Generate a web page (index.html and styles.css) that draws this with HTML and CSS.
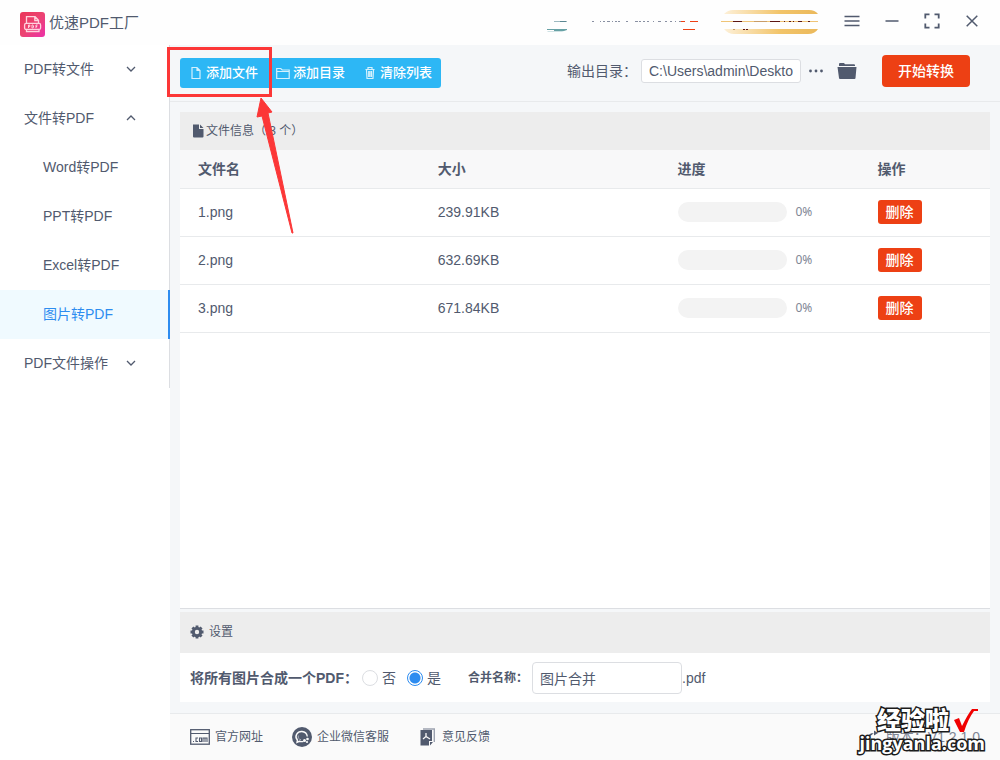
FILE: index.html
```html
<!DOCTYPE html>
<html lang="zh-CN">
<head>
<meta charset="utf-8">
<title>优速PDF工厂</title>
<link rel="stylesheet" href="styles.css">
</head>
<body>
<div class="app">
  <header class="titlebar">
    <svg class="logo" viewBox="0 0 25 25" aria-hidden="true">
      <defs><linearGradient id="lg" x1="0" y1="0" x2="1" y2="1"><stop offset="0" stop-color="#ea3659"/><stop offset=".5" stop-color="#ec4371"/><stop offset="1" stop-color="#ec31aa"/></linearGradient></defs>
      <rect width="25" height="25" rx="3" fill="url(#lg)"/>
      <g fill="none" stroke="#ffd3de" stroke-width="1.3"><path d="M6.500 11V4.700h8.600l3.400 3.600V11M14.800 4.700v3.800h3.700M6.500 17.500v2h12.500v-2"/><rect x="4.600" y="11.400" width="16" height="6" rx="1.500"/><path stroke-width="1" d="M8.500 16v-3h1.300v1.600H8.500M12 13v3h.8l.7-.7v-1.600l-.7-.7zM16 16v-3h1.600M16 14.500h1.200"/></g>
    </svg>
    <h1 class="title">优速PDF工厂</h1>
    <svg class="promo" viewBox="0 0 280 31" aria-hidden="true">
      <defs><linearGradient id="gold"><stop offset="0" stop-color="#fdf0d8"/><stop offset=".6" stop-color="#f2c469"/><stop offset="1" stop-color="#ebb95c"/></linearGradient></defs>
      <path d="M8 14.500h13" stroke="#9db9c0"/><path d="M14 14.500h6" stroke="#5b8792"/>
      <path d="M1 22.500h20" stroke="#67a1a5"/><path d="M8 23h13l-3 1H8z" fill="#67a1a5"/><path d="M1 24h17l-2 1H2z" fill="#cfe2e4"/>
      <path d="M46 14.500h2m6 0h1m2 0h2m2 0h3m2 0h1m2 0h2m1 0h2m6 0h2m7 0h3m1 0h2m2 0h2m2 0h2m4 0h1m4 0h3m4 0h2m3 0h2m3 0h1m3 0h2" stroke="#8990a2"/>
      <path d="M135 14.500h4m5 0h8m-15 8h12" stroke="#ed4014"/>
      <path d="M178 7q4-4 9-4h76q6 0 9 4zM178 22h94q-3 5-10 5h-74q-6 0-10-5z" fill="url(#gold)"/>
      <path d="M175 14.500h97" stroke="#efc477"/><path d="M187 14.500h9m28 0h10m4 0h1m4 0h2m2 0h1m4 0h4m6 0h2m-67 8h2m1 0h2" stroke="#5c1512"/><path d="M208 14.500h13m-34 8h2" stroke="#c89c68"/>
    </svg>
    <div class="window-buttons">
      <button class="icon-button" type="button" aria-label="菜单"><svg viewBox="0 0 16 16"><path d="M.5 3.500h15M.5 8h15M.5 12.500h15"/></svg></button>
      <button class="icon-button" type="button" aria-label="最小化"><svg viewBox="0 0 16 16"><path d="M1.500 8h13"/></svg></button>
      <button class="icon-button" type="button" aria-label="全屏"><svg viewBox="0 0 16 16"><path stroke-width="1.800" d="M1.300 5.500V1.300h4.200M10.500 1.300h4.200v4.200M14.700 10.500v4.200h-4.200M5.500 14.700H1.300v-4.200"/></svg></button>
      <button class="icon-button" type="button" aria-label="关闭"><svg viewBox="0 0 16 16"><path d="M2.700 2.700l10.600 10.600M13.300 2.700L2.700 13.300"/></svg></button>
    </div>
  </header>
  <div class="body">
    <aside class="sidebar">
      <nav class="menu">
        <a class="menu-item" href="#"><span>PDF转文件</span><svg class="chevron" viewBox="0 0 10 10"><path d="M1 3l4 4 4-4"/></svg></a>
        <a class="menu-item" href="#"><span>文件转PDF</span><svg class="chevron" viewBox="0 0 10 10"><path d="M1 7l4-4 4 4"/></svg></a>
        <a class="menu-item sub" href="#">Word转PDF</a>
        <a class="menu-item sub" href="#">PPT转PDF</a>
        <a class="menu-item sub" href="#">Excel转PDF</a>
        <a class="menu-item sub active" href="#">图片转PDF</a>
        <a class="menu-item" href="#"><span>PDF文件操作</span><svg class="chevron" viewBox="0 0 10 10"><path d="M1 3l4 4 4-4"/></svg></a>
      </nav>
    </aside>
    <main class="main">
      <div class="toolbar">
        <div class="button-group">
          <button class="tool" type="button"><svg viewBox="0 0 14 14"><path d="M3 1.500h5l3 3v8H3zM8 1.500v3h3"/></svg>添加文件
            <span class="highlight"><svg class="arrow" viewBox="0 0 40 136" aria-hidden="true"><path d="M4 0l11 14-4 1 25 120h-1L5 18l-5 1z"/></svg></span>
          </button>
          <button class="tool" type="button"><svg viewBox="0 0 14 14"><path d="M.7 2.500h4l1.500 1.500h7v8.500H.7zM.7 5.500h12.500"/></svg>添加目录</button>
          <button class="tool" type="button"><svg viewBox="0 0 14 14"><path d="M2.500 3.500h9M5 3V1.500h4V3M3.500 4l.5 8.500h6l.5-8.500M5.700 5v6M7 5v6M8.500 5v6"/></svg>清除列表</button>
        </div>
        <div class="output">
          <label for="out">输出目录：</label>
          <input class="path" id="out" type="text" value="C:\Users\admin\Desktop">
          <button class="icon-button more" type="button" aria-label="更多"><svg viewBox="0 0 16 16"><g fill="#515a6e" stroke="none"><circle cx="2.500" cy="8" r="1.400"/><circle cx="8" cy="8" r="1.400"/><circle cx="13.500" cy="8" r="1.400"/></g></svg></button>
          <button class="icon-button folder" type="button" aria-label="打开目录"><svg viewBox="0 0 20 18"><path fill="#515a6e" stroke="none" d="M2 4V2q0-1 1-1h4l1 1.200h9q1 0 1 1V4z"/><path fill="#515a6e" stroke="none" d="M1 5h18.500l-1 11q0 1-1 1H3q-1 0-1-1L.5 5z"/></svg></button>
          <button class="start" type="button">开始转换</button>
        </div>
      </div>
      <div class="content">
        <section class="files">
          <h2 class="panel-head"><svg class="doc" viewBox="0 0 12 14"><path fill="#515a6e" d="M1 .5h6V5h4.500v7.500q0 1-1 1H2q-1 0-1-1zM8 .5L11.500 4H8z"/></svg><span>文件信息（ 3 个）</span></h2>
          <table class="file-table">
            <colgroup><col class="wide"><col class="wide"><col class="mid"><col></colgroup>
            <thead><tr><th>文件名</th><th>大小</th><th>进度</th><th>操作</th></tr></thead>
            <tbody>
              <tr><td>1.png</td><td>239.91KB</td><td><div class="progress"><span class="track"></span><span>0%</span></div></td><td><button class="delete" type="button">删除</button></td></tr>
              <tr><td>2.png</td><td>632.69KB</td><td><div class="progress"><span class="track"></span><span>0%</span></div></td><td><button class="delete" type="button">删除</button></td></tr>
              <tr><td>3.png</td><td>671.84KB</td><td><div class="progress"><span class="track"></span><span>0%</span></div></td><td><button class="delete" type="button">删除</button></td></tr>
            </tbody>
          </table>
        </section>
        <section class="settings">
          <h2 class="panel-head settings-head"><svg class="gear" viewBox="0 0 14 14"><circle cx="7" cy="7" r="3.700" fill="none" stroke="#515a6e" stroke-width="3"/><path d="M7 .5v2M7 11.500v2M.5 7h2M11.500 7h2M2.400 2.400l1.400 1.400M10.200 10.200l1.400 1.400M11.600 2.400l-1.400 1.400M3.800 10.200l-1.400 1.400" stroke="#515a6e" stroke-width="2.800"/></svg><span>设置</span></h2>
          <div class="form">
            <span class="form-label">将所有图片合成一个PDF：</span>
            <label class="choice"><input class="radio" type="radio" name="merge">否</label>
            <label class="choice"><input class="radio" type="radio" name="merge" checked>是</label>
            <label class="name-label" for="name">合并名称：</label>
            <input class="name" id="name" type="text" value="图片合并"><span>.pdf</span>
          </div>
        </section>
      </div>
      <footer class="footer">
        <a class="foot-link" href="#"><svg class="site" viewBox="0 0 20 16"><g fill="none" stroke="#515a6e"><rect x=".7" y=".7" width="18.600" height="14.500" stroke-width="1.300"/><path d="M1 4.500h18"/><path stroke-width="1.100" d="M3 12.500h1M8 9H6v3.500h2M9.500 9h2v3.500h-2zM13 13V9h4v4M15 9v4"/></g></svg>官方网址</a>
        <a class="foot-link" href="#"><svg class="chat" viewBox="0 0 20 20"><circle cx="10" cy="10" r="10" fill="#515a6e"/><g fill="none" stroke="#fafafa" stroke-width="1.400"><path d="M11.500 14.300q-2 .6-4.200 0L5 15.400l.4-2.400Q2.900 10.300 4.600 7.300 6.400 4.300 10 4.500q4.600.4 5.300 5"/></g><path d="M6.300 8.500Q5.500 12 9 12.700" fill="none" stroke="#a9aeb9"/><g fill="#fafafa"><circle cx="12.500" cy="13.500" r="1.500"/><circle cx="15.500" cy="12" r="1.300"/><circle cx="15" cy="15" r="1.100"/></g></svg>企业微信客服</a>
        <a class="foot-link" href="#"><svg class="feedback" viewBox="0 0 15 18"><path d="M3 1h11.300v13" fill="none" stroke="#9da3b0" stroke-width="1.400"/><path d="M.5 2H12v11H9v4.500H.5zM10 14h3l-3 3.500z" fill="#515a6e"/><path d="M6 5v3.500L3 11M6 8.500L10 11" fill="none" stroke="#fafafa" stroke-width="1.300"/></svg>意见反馈</a>
        <div class="version"><svg viewBox="0 0 14 14"><path d="M2 8q0-5 6-5M8 .5v5L12 3z" fill="#515a6e"/></svg><span>版本：V1.2.1.0</span></div>
      </footer>
    </main>
  </div>
  <div class="watermark">
    <div class="mark-top"><span>经验啦</span><svg viewBox="0 0 24 24"><path d="M0 11l5-2 3 8Q14 5 18 0h6v2h-4Q14 10 10 23H6z" fill="#f00000" stroke="none"/></svg></div>
    <div class="mark-url">jingyanla.com</div>
  </div>
</div>
</body>
</html>
```
FILE: styles.css
```css
* { box-sizing: border-box; }
body {
  margin: 0;
  font: 14px/20px "Liberation Sans", "Noto Sans CJK SC", sans-serif;
  color: #515a6e;
}
button, input { font: inherit; color: inherit; margin: 0; }
button { border: 0; padding: 0; background: none; cursor: pointer; }
a { color: inherit; text-decoration: none; }
h1, h2 { margin: 0; font-weight: 400; }
svg { flex: none; }

.app { position: relative; display: flex; flex-direction: column; min-height: 100vh; overflow: hidden; background: #fff; }
.titlebar { display: flex; align-items: center; height: 45px; padding: 0 20px; background: #fefefe; }
.logo { width: 25px; height: 25px; margin: 4px 4px 0 0; }
.title { flex: 1; font-size: 15px; line-height: 24px; }
.promo { width: 280px; height: 31px; margin: 0 18px 0 0; }
.window-buttons { display: flex; gap: 24px; margin-bottom: 3px; }
.icon-button { display: flex; align-items: center; }
.icon-button svg { width: 16px; height: 16px; fill: none; stroke: #515a6e; stroke-width: 1.5; }

.body { display: flex; flex: 1; }
.sidebar { width: 170px; flex: none; }
.menu { display: flex; flex-direction: column; border-right: 1px solid #dcdee2; }
.menu-item { display: flex; align-items: center; justify-content: space-between; height: 49px; padding: 0 33px 1px 24px; }
.menu-item.sub { padding-left: 43px; }
.active { color: #2d8cf0; background: #f0faff; border-right: 2px solid #2d8cf0; margin-right: -1px; }
.chevron { width: 10px; height: 10px; fill: none; stroke: #515a6e; stroke-width: 1.3; }

.main { display: flex; flex: 1; flex-direction: column; min-width: 0; background: #f5f7f9; }
.toolbar { display: flex; align-items: center; justify-content: space-between; height: 57px; padding: 0 30px 0 10px; border-bottom: 1px solid #e8eaec; }
.button-group { display: flex; color: #fff; background: #2db7f5; border-radius: 3px; }
.tool { position: relative; display: flex; align-items: center; gap: 3px; height: 30px; padding: 0 9px; font-size: 13px; font-weight: 500; }
.tool > svg { width: 14px; height: 14px; fill: none; stroke: #d5f1fd; stroke-width: 1.2; }
.highlight { position: absolute; inset: -11px -5px -9px -13px; z-index: 2; border: 3px solid #fc3737; pointer-events: none; }
.arrow { position: absolute; top: 48px; left: 87px; width: 40px; height: 136px; fill: #fc3737; stroke: #fc3737; overflow: visible; }
.output { display: flex; align-items: center; margin-bottom: 4px; }
.path { width: 160px; height: 24px; padding: 0 7px; margin-left: 4px; background: #fff; border: 1px solid #dcdee2; border-radius: 3px; }
.more { margin: 0 13px 0 7px; }
.folder svg { width: 20px; height: 18px; }
.start { width: 88px; height: 32px; margin-left: 25px; color: #fff; background: #ed4014; border-radius: 4px; font-weight: 500; }

.content { display: flex; flex: 1; flex-direction: column; gap: 3px; padding: 10px 10px 11px; }
.files { flex: 1; background: #fff; border-bottom: 1px solid #dcdee2; }
.panel-head { display: flex; align-items: center; height: 38px; padding: 0 12px; font-size: 12px; background: #ededed; }
.doc { width: 12px; height: 14px; margin-right: 2px; }
.file-table { width: 100%; table-layout: fixed; border-collapse: separate; border-spacing: 0; text-align: left; }
.wide { width: 29.6%; }
.mid { width: 24.7%; }
.file-table th, .file-table td { height: 48px; padding: 0 17px 1px 18px; border-bottom: 1px solid #e8eaec; }
.file-table th { height: 39px; background: #f8f8f9; }
.progress { display: flex; align-items: center; gap: 9px; margin-right: -18px; font: 12px/20px "Noto Sans", sans-serif; color: #808695; }
.track { width: 109px; height: 20px; border-radius: 10px; background: #f3f3f3; }
.delete { display: block; width: 44px; height: 24px; color: #fff; background: #ed4014; border-radius: 3px; font-weight: 500; }

.settings { background: #fff; }
.settings-head { height: 41px; padding: 0 10px 2px; }
.gear { width: 14px; height: 14px; margin-right: 5px; }
.form { display: flex; align-items: center; height: 49px; padding: 0 10px; }
.form-label { margin-right: 4px; font-weight: 700; }
.choice { display: flex; align-items: center; gap: 4px; margin-right: 11px; }
.radio { appearance: none; width: 16px; height: 16px; border: 1px solid #dcdee2; border-radius: 50%; background: #fff; }
.radio:checked { border-color: #2d8cf0; background: radial-gradient(circle, #2d8cf0 5px, #fff 6px); }
.name-label { width: 64px; margin-left: 16px; font-size: 12px; font-weight: 700; white-space: nowrap; }
.name { width: 150px; height: 32px; padding: 0 7px; background: #fff; border: 1px solid #dcdee2; border-radius: 4px; }

.footer { display: flex; align-items: center; height: 47px; padding: 0 20px; gap: 29px; font-size: 12px; background: #fafafa; border-top: 1px solid #e8eaec; }
.foot-link { display: flex; align-items: center; gap: 5px; }
.site { width: 20px; height: 16px; }
.chat { width: 20px; height: 20px; }
.feedback { width: 15px; height: 18px; margin: 0 2px; }
.version { display: flex; align-items: center; gap: 6px; margin-left: auto; font-size: 14px; color: #808695; white-space: nowrap; }
.version svg { width: 14px; height: 14px; }

.watermark { position: absolute; right: 15px; bottom: 7px; z-index: 3; color: #fff; font-weight: 900; -webkit-text-stroke: 3px #1b1b1b; paint-order: stroke fill; }
.mark-top { display: flex; align-items: center; justify-content: flex-end; gap: 5px; padding-right: 7px; font-size: 24px; line-height: 24px; }
.mark-top svg { width: 24px; height: 24px; }
.mark-url { font: 700 18px/20px "Open Sans", "Noto Sans", sans-serif; }
```
